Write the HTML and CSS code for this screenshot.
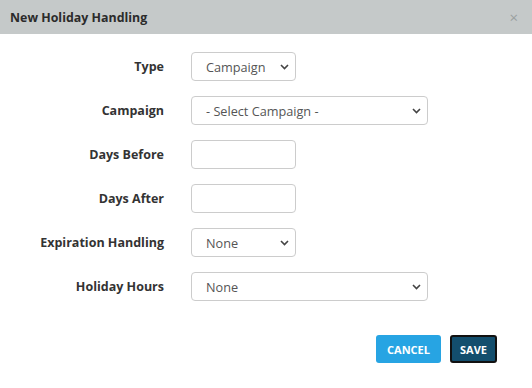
FILE: index.html
```html
<!DOCTYPE html>
<html>
<head>
<meta charset="utf-8">
<link rel="stylesheet" href="styles.css">
</head>
<body>
<div class="modal">
  <div class="modal-header">
    <span class="modal-title">New Holiday Handling</span>
    <span class="close">×</span>
  </div>
  <div class="modal-body">
    <div class="row">
      <label class="lbl">Type</label>
      <span class="sel w-sm">
        <select class="ctl"><option>Campaign</option></select>
        <svg class="chev" width="9" height="6" viewBox="0 0 9 6"><path d="M1 1 L4.5 4.5 L8 1" fill="none" stroke="#444" stroke-width="1.6"/></svg>
      </span>
    </div>
    <div class="row">
      <label class="lbl">Campaign</label>
      <span class="sel w-lg">
        <select class="ctl"><option>- Select Campaign -</option></select>
        <svg class="chev" width="9" height="6" viewBox="0 0 9 6"><path d="M1 1 L4.5 4.5 L8 1" fill="none" stroke="#444" stroke-width="1.6"/></svg>
      </span>
    </div>
    <div class="row">
      <label class="lbl">Days Before</label>
      <input class="ctl w-sm" type="text">
    </div>
    <div class="row">
      <label class="lbl">Days After</label>
      <input class="ctl w-sm" type="text">
    </div>
    <div class="row">
      <label class="lbl">Expiration Handling</label>
      <span class="sel w-sm">
        <select class="ctl"><option>None</option></select>
        <svg class="chev" width="9" height="6" viewBox="0 0 9 6"><path d="M1 1 L4.5 4.5 L8 1" fill="none" stroke="#444" stroke-width="1.6"/></svg>
      </span>
    </div>
    <div class="row">
      <label class="lbl">Holiday Hours</label>
      <span class="sel w-lg">
        <select class="ctl"><option>None</option></select>
        <svg class="chev" width="9" height="6" viewBox="0 0 9 6"><path d="M1 1 L4.5 4.5 L8 1" fill="none" stroke="#444" stroke-width="1.6"/></svg>
      </span>
    </div>
  </div>
  <div class="modal-footer">
    <button class="btn btn-cancel">CANCEL</button>
    <button class="btn btn-save">SAVE</button>
  </div>
</div>
</body>
</html>
```
FILE: styles.css
```css
html, body {
  margin: 0;
  padding: 0;
  background: #ffffff;
  font-family: "Open Sans", "Liberation Sans", sans-serif;
}
.modal {
  width: 532px;
  height: 388px;
  display: flex;
  flex-direction: column;
}
.modal-header {
  height: 34px;
  background: #c5c9c9;
  display: flex;
  align-items: center;
  justify-content: space-between;
  padding: 0 10px;
  box-sizing: border-box;
}
.modal-title {
  font-size: 12.4px;
  font-weight: 700;
  color: #2b2b2b;
}
.close {
  font-size: 15px;
  color: #9aa0a0;
  margin-right: 4px;
}
.modal-body {
  padding-top: 18px;
  display: flex;
  flex-direction: column;
  gap: 15px;
}
.row {
  display: flex;
  align-items: center;
  height: 29px;
}
.lbl {
  width: 164px;
  text-align: right;
  font-size: 12.5px;
  font-weight: 700;
  color: #333333;
  margin-right: 27px;
}
.sel {
  position: relative;
  display: block;
  height: 29px;
}
.sel .ctl {
  width: 100%;
  appearance: none;
  -webkit-appearance: none;
  padding: 0 20px 0 14px;
}
.chev {
  position: absolute;
  right: 7px;
  top: 12px;
  pointer-events: none;
}
.ctl {
  height: 29px;
  box-sizing: border-box;
  border: 1px solid #cccccc;
  border-radius: 4px;
  background: #ffffff;
  font-family: "Open Sans", "Liberation Sans", sans-serif;
  font-size: 12.7px;
  color: #555555;
  padding: 0 10px;
  margin: 0;
}
.w-sm { width: 105px; }
.w-lg { width: 237px; }
.modal-footer {
  display: flex;
  justify-content: flex-end;
  gap: 9px;
  padding-right: 35px;
  margin-top: 34px;
}
.btn {
  height: 28px;
  border-radius: 3px;
  font-family: "Open Sans", "Liberation Sans", sans-serif;
  font-size: 11px;
  font-weight: 700;
  color: #ffffff;
  border: none;
  padding: 0;
}
.btn-cancel {
  width: 65px;
  background: #27a4e3;
}
.btn-save {
  width: 47px;
  background: #134e6d;
  border: 2px solid #111111;
}
```
